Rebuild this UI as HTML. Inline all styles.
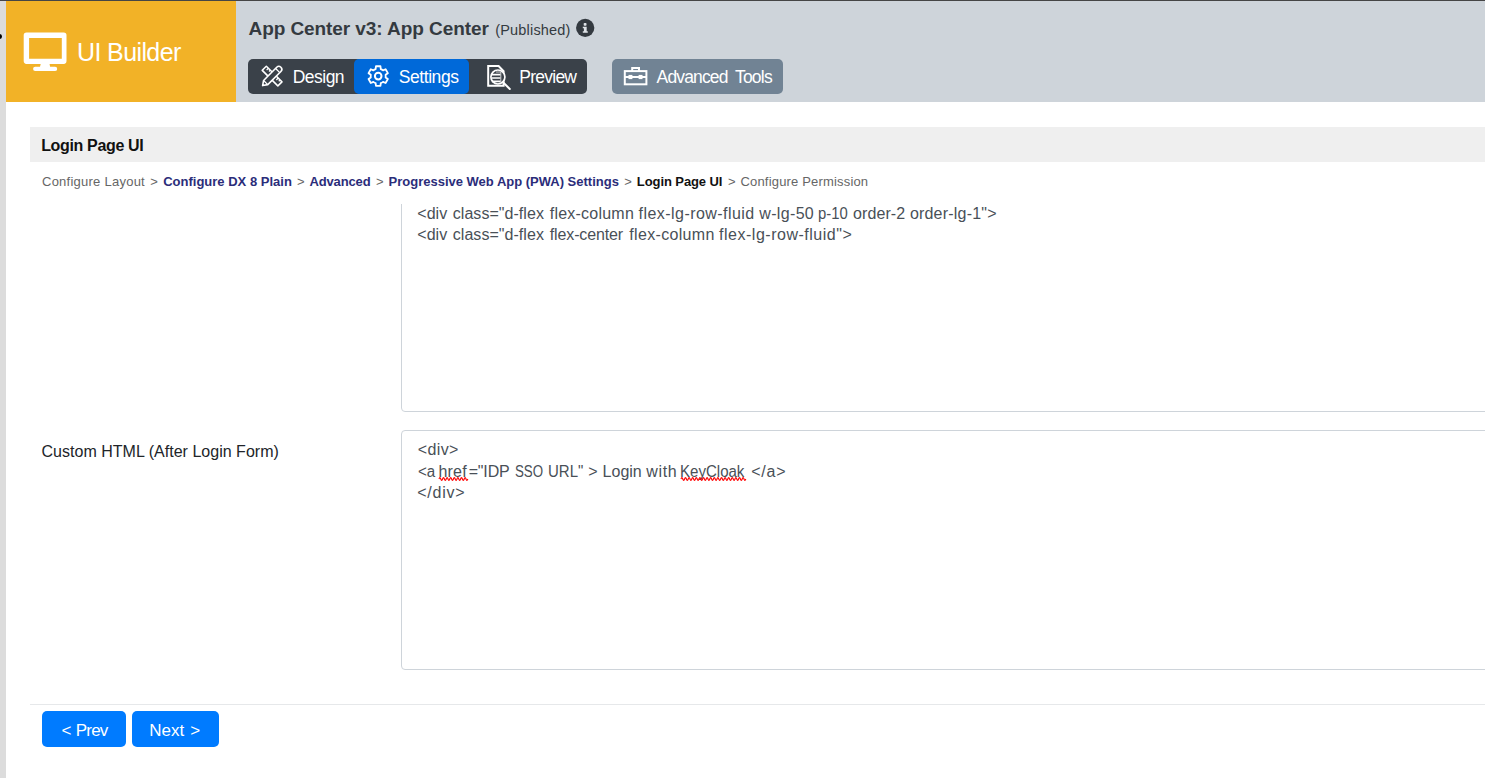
<!DOCTYPE html>
<html>
<head>
<meta charset="utf-8">
<title>UI Builder</title>
<style>
html,body{margin:0;padding:0;}
body{width:1485px;height:778px;overflow:hidden;background:#fff;position:relative;font-family:"Liberation Sans",sans-serif;}
.abs{position:absolute;}
.t{position:absolute;white-space:nowrap;line-height:1;transform-origin:0 0;}
#strip{left:0;top:0;width:6px;height:778px;background:#dcdcdc;}
#topline{left:0;top:0;width:1485px;height:1px;background:#454545;}
#dot{left:-3.5px;top:34px;width:5px;height:5px;border-radius:50%;background:#000;}
#hdr{left:236px;top:1px;width:1249px;height:101px;background:#ced4da;}
#logo{left:6px;top:1px;width:230px;height:101px;background:#f2b227;}
.btn{position:absolute;top:59px;height:35px;}
#grp{left:248px;width:339px;background:#3a4149;border-radius:5px;}
#set{left:354px;width:115px;background:#0069d9;border-radius:5px;}
#adv{left:612px;width:171px;background:#718394;border-radius:5px;}
#ptitle{left:30px;top:127px;width:1455px;height:35px;background:#efefef;}
.ta{position:absolute;left:401px;width:1200px;border:1px solid #ced4da;box-sizing:border-box;border-radius:4px;}
#ta1{top:150px;height:262px;clip-path:inset(54px 0 0 0);}
#ta2{top:430px;height:240px;}
#hr{left:30px;top:704px;width:1455px;height:1px;background:#e6e8ea;}
.pb{position:absolute;top:711px;height:36px;background:#007bff;border-radius:5px;}
.code{color:#495057;font-size:16px;}
.bc{font-size:13px;top:174.75px;color:#666;}
.bcb{font-weight:bold;color:#2b2d7a;}
.squig{position:absolute;height:3px;}
</style>
</head>
<body>
<div id="strip" class="abs"></div>
<div id="logo" class="abs"></div>
<div id="hdr" class="abs"></div>
<div id="topline" class="abs"></div>
<div id="dot" class="abs"></div>

<!-- monitor icon -->
<svg class="abs" style="left:20px;top:30px" width="50" height="44" viewBox="20 30 50 44">
  <path fill="#fff" fill-rule="evenodd" d="M26.5 32.4 H63.7 a2.8 2.8 0 0 1 2.8 2.8 V61.1 a2.8 2.8 0 0 1 -2.8 2.8 H26.5 a2.8 2.8 0 0 1 -2.8 -2.8 V35.2 a2.8 2.8 0 0 1 2.8 -2.8 Z M29.1 37.9 V58.8 H61.8 V37.9 Z"/>
  <path fill="#fff" d="M40.8 63.5 H49.5 L50.2 67.5 H39.8 Z"/>
  <rect x="33.1" y="66.8" width="24.1" height="4.2" rx="2.1" fill="#fff"/>
</svg>
<span class="t" id="uib" style="left:77.00px;letter-spacing:-0.611px;top:39.85px;font-size:25px;color:#fff;">UI Builder</span>

<span class="t" id="ttl" style="left:248.50px;letter-spacing:-0.074px;top:18.75px;font-size:19px;font-weight:bold;color:#343a40;">App Center v3: App Center</span>
<span class="t" id="pub" style="left:495.15px;letter-spacing:0.195px;top:23.30px;font-size:14.5px;color:#343a40;">(Published)</span>
<svg class="abs" style="left:576px;top:18px" width="19" height="20" viewBox="0 0 19 20">
  <circle cx="9.2" cy="9.85" r="9.15" fill="#343a40"/>
  <rect x="7.7" y="5.1" width="2.8" height="2.6" rx="0.7" fill="#dfe3e7"/>
  <path d="M6.8 8.8h3.9v4.5h1.1v1.4H6.8v-1.4h1.1v-3.1H6.8z" fill="#dfe3e7"/>
</svg>

<div id="grp" class="btn"></div>
<div id="set" class="btn"></div>
<div id="adv" class="btn"></div>

<span class="t" id="b1" style="left:292.75px;letter-spacing:-0.530px;top:69.10px;font-size:17.5px;color:#fff;">Design</span>
<span class="t" id="b2" style="left:398.75px;letter-spacing:-0.429px;top:69.10px;font-size:17.5px;color:#fff;">Settings</span>
<span class="t" id="b3" style="left:519.35px;letter-spacing:-0.766px;top:69.10px;font-size:17.5px;color:#fff;">Preview</span>
<span class="t" id="b4a" style="left:656.55px;letter-spacing:-0.843px;top:69.10px;font-size:17.5px;color:#fff;">Advanced</span>
<span class="t" id="b4b" style="left:734.95px;letter-spacing:-0.787px;top:69.10px;font-size:17.5px;color:#fff;">Tools</span>

<!-- toolbar icons -->
<svg class="abs" style="left:259px;top:63px" width="26" height="26" viewBox="-2 -2 26 26">
  <g fill="none" stroke="#fff" stroke-width="1.6" stroke-linejoin="round">
    <g transform="rotate(45 11.1 11.1)">
      <rect x="0.05" y="8.2" width="22.1" height="5.8"/>
      <path d="M3 8.2v2.6M5.6 8.2v1.8M16.8 8.2v2.6M19.4 8.2v1.8" stroke-width="1.3"/>
    </g>
    <g transform="rotate(-45 11.1 11.1)">
      <path d="M-2.3 11.1 L2 8.15 H20.6 a2.95 2.95 0 0 1 0 5.9 H2 Z" fill="#3a4149"/>
      <path d="M2 8.15v5.9M19 8.15v5.9" stroke-width="1.3"/>
    </g>
  </g>
</svg>
<svg class="abs" style="left:366px;top:64px" width="25" height="25" viewBox="-12.5 -12.5 25 25">
  <path d="M-2.57 -7.05 L-2.27 -9.84 L2.27 -9.84 L2.57 -7.05 A7.5 7.5 0 0 1 4.82 -5.75 L7.39 -6.89 L9.66 -2.95 L7.39 -1.30 A7.5 7.5 0 0 1 7.39 1.30 L9.66 2.95 L7.39 6.89 L4.82 5.75 A7.5 7.5 0 0 1 2.57 7.05 L2.27 9.84 L-2.27 9.84 L-2.57 7.05 A7.5 7.5 0 0 1 -4.82 5.75 L-7.39 6.89 L-9.66 2.95 L-7.39 1.30 A7.5 7.5 0 0 1 -7.39 -1.30 L-9.66 -2.95 L-7.39 -6.89 L-4.82 -5.75 A7.5 7.5 0 0 1 -2.57 -7.05 Z" transform="translate(-0.3,-0.4)" fill="none" stroke="#fff" stroke-width="1.8" stroke-linejoin="round"/>
  <circle cx="-0.3" cy="-0.4" r="3.3" fill="none" stroke="#fff" stroke-width="2"/>
</svg>
<svg class="abs" style="left:485px;top:63px" width="30" height="30" viewBox="485 63 30 30">
  <g fill="none" stroke="#fff" stroke-linejoin="miter">
    <path d="M498.6 66 H488.2 V85.8 H503.6 V71.2 Z" stroke-width="2"/>
    <circle cx="497.9" cy="77" r="7" stroke-width="1.7" fill="#3a4149"/>
    <path d="M491.8 74.7h8.6M491.6 78h8.8M491.8 81.3h8.6" stroke-width="1.7"/>
    <path d="M496 72h4.8v10" stroke-width="1" stroke-opacity="0.75"/>
    <path d="M503 82.2 L509.8 89" stroke-width="2" stroke-linecap="round"/>
  </g>
</svg>
<svg class="abs" style="left:622px;top:65px" width="28" height="24" viewBox="622 65 28 24">
  <g fill="none" stroke="#fff" stroke-width="2">
    <rect x="624.8" y="71.1" width="21.6" height="13.2"/>
    <path d="M632.2 71.1 V68 H639 V71.1"/>
    <path d="M624.8 77 H646.4"/>
  </g>
  <rect x="628.5" y="74.9" width="3.9" height="4.2" fill="#fff"/>
  <rect x="638.6" y="74.9" width="3.9" height="4.2" fill="#fff"/>
</svg>

<div id="ptitle" class="abs"></div>
<span class="t" id="pt" style="left:41.20px;letter-spacing:-0.346px;top:138.30px;font-size:16px;font-weight:bold;color:#111;">Login Page UI</span>

<span class="t bc" id="c1" style="left:42.00px;letter-spacing:0.248px;">Configure Layout</span>
<span class="t bc" id="g1" style="left:150.20px;letter-spacing:0.000px;">&gt;</span>
<span class="t bc bcb" id="c2" style="left:163.20px;letter-spacing:0.004px;">Configure DX 8 Plain</span>
<span class="t bc" id="g2" style="left:297.10px;letter-spacing:0.000px;">&gt;</span>
<span class="t bc bcb" id="c3" style="left:309.45px;letter-spacing:-0.143px;">Advanced</span>
<span class="t bc" id="g3" style="left:375.90px;letter-spacing:0.000px;">&gt;</span>
<span class="t bc bcb" id="c4" style="left:388.55px;letter-spacing:-0.003px;">Progressive Web App (PWA) Settings</span>
<span class="t bc" id="g4" style="left:624.30px;letter-spacing:0.000px;">&gt;</span>
<span class="t bc bcb" id="c5" style="left:636.85px;letter-spacing:-0.089px;color:#111;">Login Page UI</span>
<span class="t bc" id="g5" style="left:728.00px;letter-spacing:0.000px;">&gt;</span>
<span class="t bc" id="c6" style="left:740.50px;letter-spacing:0.175px;">Configure Permission</span>

<div id="ta1" class="ta"></div>
<div id="ta2" class="ta"></div>

<span class="t code" id="l1a" style="left:417.35px;letter-spacing:-0.001px;top:206.40px;">&lt;div</span>
<span class="t code" id="l1b" style="left:452.80px;letter-spacing:0.041px;top:206.40px;">class="d-flex</span>
<span class="t code" id="l1c" style="left:549.75px;letter-spacing:0.225px;top:206.40px;">flex-column</span>
<span class="t code" id="l1d" style="left:638.55px;letter-spacing:0.453px;top:206.40px;">flex-lg-row-fluid</span>
<span class="t code" id="l1e" style="left:759.30px;letter-spacing:0.333px;top:206.40px;">w-lg-50</span>
<span class="t code" id="l1f" style="left:818.35px;letter-spacing:0.000px;top:206.40px;transform:scaleX(0.9273);">p-10</span>
<span class="t code" id="l1g" style="left:853.10px;letter-spacing:0.082px;top:206.40px;">order-2</span>
<span class="t code" id="l1h" style="left:909.90px;letter-spacing:0.203px;top:206.40px;">order-lg-1"&gt;</span>
<span class="t code" id="l2a" style="left:417.35px;letter-spacing:-0.001px;top:226.60px;">&lt;div</span>
<span class="t code" id="l2b" style="left:452.80px;letter-spacing:0.041px;top:226.60px;">class="d-flex</span>
<span class="t code" id="l2c" style="left:549.75px;letter-spacing:-0.125px;top:226.60px;">flex-center</span>
<span class="t code" id="l2d" style="left:629.35px;letter-spacing:0.325px;top:226.60px;">flex-column</span>
<span class="t code" id="l2e" style="left:719.05px;letter-spacing:0.513px;top:226.60px;">flex-lg-row-fluid"&gt;</span>

<span class="t" id="lbl" style="left:41.55px;letter-spacing:0.017px;top:443.50px;font-size:16px;color:#212529;">Custom HTML (After Login Form)</span>

<span class="t code" id="m1" style="left:417.65px;letter-spacing:0.414px;top:442.40px;">&lt;div&gt;</span>
<span class="t code" id="m2a" style="left:417.90px;letter-spacing:0.000px;top:463.90px;transform:scaleX(0.9466);">&lt;a</span>
<span class="t code" id="m2b" style="left:438.55px;letter-spacing:0.166px;top:463.90px;">href</span>
<span class="t code" id="m2c" style="left:468.65px;letter-spacing:-0.151px;top:463.90px;">="IDP</span>
<span class="t code" id="m2d" style="left:514.60px;letter-spacing:0.000px;top:463.90px;transform:scaleX(0.8316);">SSO</span>
<span class="t code" id="m2e" style="left:548.35px;letter-spacing:0.000px;top:463.90px;transform:scaleX(0.9365);">URL"</span>
<span class="t code" id="m2f" style="left:588.20px;letter-spacing:0.000px;top:463.90px;">&gt;</span>
<span class="t code" id="m2g" style="left:602.60px;letter-spacing:0.000px;top:463.90px;">Login</span>
<span class="t code" id="m2h" style="left:646.35px;letter-spacing:0.599px;top:463.90px;">with</span>
<span class="t code" id="m2i" style="left:680.20px;letter-spacing:0.000px;top:463.90px;transform:scaleX(0.9403);">KeyCloak</span>
<span class="t code" id="m2j" style="left:751.20px;letter-spacing:0.767px;top:463.90px;">&lt;/a&gt;</span>
<span class="t code" id="m3" style="left:417.25px;letter-spacing:0.750px;top:485.40px;">&lt;/div&gt;</span>

<svg class="abs sq" style="left:438px;top:476.4px" width="32" height="5" viewBox="0 0 32 5"><path d="M1 3 q0.9 -2.8 1.8 0 t1.8 0 t1.8 0 t1.8 0 t1.8 0 t1.8 0 t1.8 0 t1.8 0 t1.8 0 t1.8 0 t1.8 0 t1.8 0 t1.8 0 t1.8 0 t1.8 0 t1.8 0" fill="none" stroke="#f00" stroke-width="1.15"/></svg>
<svg class="abs sq" style="left:680.4px;top:476.4px" width="68" height="5" viewBox="0 0 68 5"><path d="M1 3 q0.9 -2.8 1.8 0 t1.8 0 t1.8 0 t1.8 0 t1.8 0 t1.8 0 t1.8 0 t1.8 0 t1.8 0 t1.8 0 t1.8 0 t1.8 0 t1.8 0 t1.8 0 t1.8 0 t1.8 0 t1.8 0 t1.8 0 t1.8 0 t1.8 0 t1.8 0 t1.8 0 t1.8 0 t1.8 0 t1.8 0 t1.8 0 t1.8 0 t1.8 0 t1.8 0 t1.8 0 t1.8 0 t1.8 0 t1.8 0 t1.8 0 t1.8 0 t1.8 0" fill="none" stroke="#f00" stroke-width="1.15"/></svg>
<div id="hr" class="abs"></div>
<div class="pb" style="left:42px;width:84px;"></div>
<div class="pb" style="left:132px;width:87px;"></div>
<span class="t" id="p1a" style="left:61.45px;letter-spacing:0.000px;top:721.50px;font-size:17px;color:#fff;">&lt;</span>
<span class="t" id="p1b" style="left:75.75px;letter-spacing:-0.784px;top:721.50px;font-size:17px;color:#fff;">Prev</span>
<span class="t" id="p2a" style="left:149.15px;letter-spacing:0.084px;top:721.50px;font-size:17px;color:#fff;">Next</span>
<span class="t" id="p2b" style="left:190.35px;letter-spacing:0.000px;top:721.50px;font-size:17px;color:#fff;">&gt;</span>
</body>
</html>
